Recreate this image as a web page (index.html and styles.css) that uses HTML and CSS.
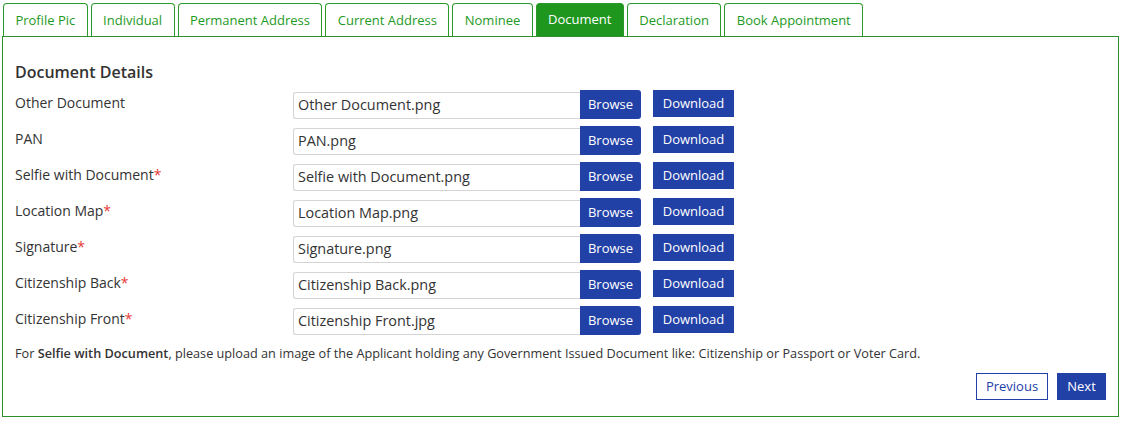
FILE: index.html
```html
<!DOCTYPE html>
<html>
<head>
<meta charset="utf-8">
<link rel="stylesheet" href="styles.css">
</head>
<body>
<div class="wrap">
  <ul class="tabs">
    <li class="tab">Profile Pic</li>
    <li class="tab">Individual</li>
    <li class="tab">Permanent Address</li>
    <li class="tab">Current Address</li>
    <li class="tab">Nominee</li>
    <li class="tab active">Document</li>
    <li class="tab">Declaration</li>
    <li class="tab">Book Appointment</li>
  </ul>
  <div class="panel">
    <h3 class="title">Document Details</h3>
    <div class="rows">
      <div class="row"><div class="label">Other Document</div><div class="group"><div class="input">Other Document.png</div><span class="btn browse">Browse</span></div><span class="btn download">Download</span></div>
      <div class="row"><div class="label">PAN</div><div class="group"><div class="input">PAN.png</div><span class="btn browse">Browse</span></div><span class="btn download">Download</span></div>
      <div class="row"><div class="label">Selfie with Document<span class="req">*</span></div><div class="group"><div class="input">Selfie with Document.png</div><span class="btn browse">Browse</span></div><span class="btn download">Download</span></div>
      <div class="row"><div class="label">Location Map<span class="req">*</span></div><div class="group"><div class="input">Location Map.png</div><span class="btn browse">Browse</span></div><span class="btn download">Download</span></div>
      <div class="row"><div class="label">Signature<span class="req">*</span></div><div class="group"><div class="input">Signature.png</div><span class="btn browse">Browse</span></div><span class="btn download">Download</span></div>
      <div class="row"><div class="label">Citizenship Back<span class="req">*</span></div><div class="group"><div class="input">Citizenship Back.png</div><span class="btn browse">Browse</span></div><span class="btn download">Download</span></div>
      <div class="row"><div class="label">Citizenship Front<span class="req">*</span></div><div class="group"><div class="input">Citizenship Front.jpg</div><span class="btn browse">Browse</span></div><span class="btn download">Download</span></div>
    </div>
    <p class="note">For <b>Selfie with Document</b>, please upload an image of the Applicant holding any Government Issued Document like: Citizenship or Passport or Voter Card.</p>
    <div class="actions">
      <span class="btn outline">Previous</span>
      <span class="btn next">Next</span>
    </div>
  </div>
</div>
</body>
</html>
```
FILE: styles.css
```css
* { box-sizing: border-box; }
body {
  margin: 0;
  font-family: "Open Sans", "DejaVu Sans", sans-serif;
  color: #333;
  background: #fff;
}
.wrap {
  padding: 3px 3px 0 2px;
}
.tabs {
  list-style: none;
  margin: 0;
  padding: 0 0 0 1px;
  display: flex;
  gap: 3px;
  height: 33px;
}
.tab {
  height: 33px;
  padding: 0 11.4px;
  border: 1px solid #2a9a2a;
  border-bottom: none;
  border-radius: 4px 4px 0 0;
  color: #1e9a1e;
  font-size: 13px;
  line-height: 32px;
  background: #fff;
}
.tab.active {
  background: #1f971f;
  color: #fff;
  line-height: 30px;
}
.panel {
  border: 1px solid #2f8f2f;
  height: 381px;
  padding: 24px 12px 0 12px;
}
.title {
  margin: 0 0 7px 0;
  font-size: 16px;
  font-weight: 600;
  line-height: 22px;
}
.rows {
  display: flex;
  flex-direction: column;
  gap: 8px;
}
.row {
  display: flex;
  align-items: flex-start;
  height: 28px;
}
.label {
  width: 278px;
  font-size: 14px;
  line-height: 20px;
  margin-top: 3px;
}
.req { color: #e53935; }
.group {
  display: flex;
  height: 28px;
}
.input {
  width: 287px;
  height: 27px;
  margin-top: 2px;
  border: 1px solid #d4d4d4;
  border-right: none;
  border-radius: 3px 0 0 3px;
  padding: 0 4px;
  font-size: 14.4px;
  line-height: 24px;
}
.btn {
  display: inline-block;
  background: #2241a7;
  color: #fff;
  font-size: 13px;
  text-align: center;
}
.browse {
  width: 61px;
  height: 29px;
  line-height: 28px;
  border-radius: 0 3px 3px 0;
}
.download {
  width: 81px;
  height: 27px;
  line-height: 26px;
  margin-left: 12px;
}
.note {
  margin: 10px 0 0 0;
  font-size: 12.7px;
  line-height: 18px;
}
.note b { font-weight: 600; }
.actions {
  display: flex;
  justify-content: flex-end;
  gap: 9px;
  margin-top: 11px;
}
.outline {
  background: #fff;
  color: #2241a7;
  border: 1px solid #2241a7;
  width: 72px;
  height: 27px;
  line-height: 25px;
}
.next {
  width: 49px;
  height: 27px;
  line-height: 27px;
}
```
